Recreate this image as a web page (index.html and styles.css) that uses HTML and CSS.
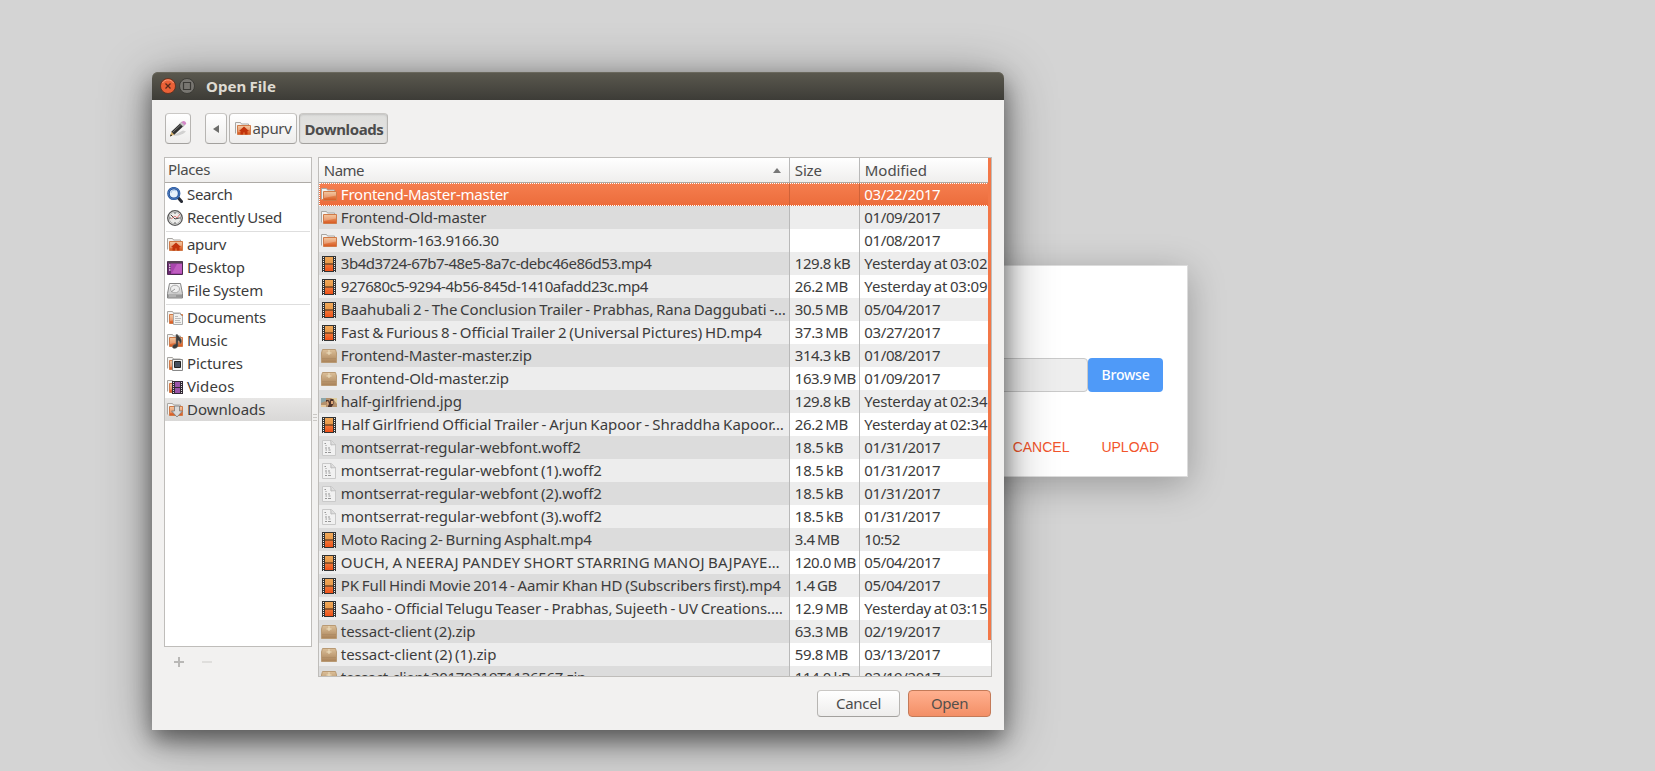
FILE: index.html
```html
<!DOCTYPE html>
<html lang="en">
<head>
<meta charset="utf-8">
<title>Open File</title>
<link rel="stylesheet" href="styles.css">
</head>
<body>
<svg class="defs" width="0" height="0">
  <defs>
    <linearGradient id="or" x1="0" y1="0" x2="0" y2="1"><stop offset="0" stop-color="#f0b680"/><stop offset="1" stop-color="#d8561f"/></linearGradient>
    <linearGradient id="film" x1="0" y1="0" x2="0" y2="1"><stop offset="0" stop-color="#f0a858"/><stop offset=".5" stop-color="#e89848"/><stop offset=".55" stop-color="#f07838"/><stop offset="1" stop-color="#f05018"/></linearGradient>
    <linearGradient id="box" x1="0" y1="0" x2="0" y2="1"><stop offset="0" stop-color="#dcc09a"/><stop offset="1" stop-color="#a98258"/></linearGradient>
    <linearGradient id="gr" x1="0" y1="0" x2="0" y2="1"><stop offset="0" stop-color="#fafafa"/><stop offset="1" stop-color="#b8b8b8"/></linearGradient>
  </defs>
  <symbol id="folder" viewBox="0 0 16 16"><path d="M.5 12.500v-11h5l1 1.500h7v3" fill="#f4f3f1" stroke="#a9a6a2"/><path d="M2.500 4.500h13v9h-13z" fill="url(#or)" stroke="#d07a48"/><path d="M3 5h12v3.500L3 11z" fill="#fff" opacity=".25"/></symbol>
  <symbol id="home" viewBox="0 0 16 16"><use href="#folder"/><path d="M9 5.500l5 4.500h-1.500v3.500h-2.500v-2h-2v2H5.500V10H4z" fill="#c2330b"/></symbol>
  <symbol id="film-i" viewBox="0 0 16 16"><path d="M1 0h14v16H1z" fill="#333"/><path d="M4 1h8v14H4z" fill="url(#film)"/><path d="M4 8h8" stroke="#402010" stroke-width="1"/><path d="M2.500 1v15M13.500 1v15" stroke="#eee" stroke-width="1" stroke-dasharray="1 1"/></symbol>
  <symbol id="zip" viewBox="0 0 16 16"><path d="M1.500 1.500h13l1 3.500v9.500H.5V5z" fill="url(#box)" stroke="#b99a74"/><path d="M1 5.500h14" stroke="#cbad86"/><path d="M8 2v5M5.500 5h5" stroke="#eee0c0" stroke-width="1"/><path d="M1 10.500h14" stroke="#a98760" opacity=".5"/></symbol>
  <symbol id="doc" viewBox="0 0 16 16"><path d="M1.500.5h9l4 4v11h-13z" fill="#f1f1f1" stroke="#c9c9c9"/><path d="M9.500.5c1 2 0 3 .5 4.500 2-.5 3 0 4.500-.5" fill="#ddd" stroke="#bbb"/><path d="M3.500 3.500h1.500M4.500 5.500h1M4 8h2M7 8h2M4.500 10h1.500M7.500 10h2M4 12.500h2M7 12.500h3" stroke="#969696" stroke-width="1.200"/></symbol>
  <symbol id="photo" viewBox="0 0 16 16"><path d="M0 4h16v9H0z" fill="#b4916c"/><path d="M0 4h5v3l-5 2z" fill="#8ba5a8"/><path d="M10 4h6v6l-3-4z" fill="#e0cfa0"/><path d="M5 6h2.500l1 2 1-3h3v5l-2 3H7l0-3-2-1z" fill="#4d332a"/><path d="M5 8l2-1 1 3-1 2zM10 7h2v3h-2z" fill="#dca77a"/><path d="M0 11h5v2H0z" fill="#e6c79a"/></symbol>
  <symbol id="search" viewBox="0 0 16 16"><path d="M11 10.500l3.500 4" stroke="#272b35" stroke-width="3" stroke-linecap="round"/><circle cx="6.800" cy="6.500" r="5.300" fill="#e9f1fa" stroke="#24549c" stroke-width="2.600"/><circle cx="6.800" cy="6.500" r="5.500" fill="none" stroke="#628ccc" stroke-width=".7"/><path d="M4 6a3 3 0 0 1 5-2" stroke="#a9c4e8" fill="none"/></symbol>
  <symbol id="clock" viewBox="0 0 16 16"><circle cx="8" cy="8" r="7.300" fill="#ececea" stroke="#555" stroke-width="1.300"/><circle cx="8" cy="8" r="5.800" fill="none" stroke="#bbb" stroke-width="1"/><path d="M4 5l4 4 4-1" stroke="#444" fill="none"/><path d="M4 9l4-3 2 2 3-4" stroke="#d66" fill="none" stroke-width=".8"/><path d="M8 2v2M8 12v2M2 8h2M12 8h2" stroke="#666"/></symbol>
  <symbol id="desktop" viewBox="0 0 16 16"><path d="M.5 1.500h15v13H.5z" fill="#a845ad" stroke="#4b2b4e"/><path d="M1 1h14v2.500H1z" fill="#554355"/><path d="M1 3.500h3v11H1z" fill="#6a2a70"/><path d="M2 5h1.500M2 7.500h1.500M2 10h1.500" stroke="#e8cdea" stroke-width="1.400"/><path d="M5 13l5-9h5v9z" fill="#d271cf" opacity=".55"/></symbol>
  <symbol id="drive" viewBox="0 0 16 16"><path d="M2.500.5h11l2 10v4.500H.5v-4.500z" fill="url(#gr)" stroke="#858585"/><ellipse cx="8" cy="6" rx="4.500" ry="3.800" fill="#eee" stroke="#aaa"/><path d="M4 9l4-3" stroke="#999"/><path d="M1 11.500h14v3H1z" fill="#999"/><path d="M2 13h7" stroke="#ccc"/></symbol>
  <symbol id="documents" viewBox="0 0 16 16"><use href="#folder"/><path d="M6.500 3.500h6l3 3v8h-9z" fill="#f2f2f0" stroke="#aaa"/><path d="M8 6.500h3M8 8.500h6M8 10.500h5M8 12.500h6" stroke="#bbb"/></symbol>
  <symbol id="music" viewBox="0 0 16 16"><use href="#folder"/><path d="M9 1.500h1.500c.5 2 4.500 3 4 7.500l-1.500 2c0-2-.5-3-2-3.500V12.500c0 3-5.500 4-5.500 1.500C5.500 12 7.500 11 9 11z" fill="#3b3b3b" stroke="#777" stroke-width=".5"/></symbol>
  <symbol id="pictures" viewBox="0 0 16 16"><use href="#folder"/><path d="M5.500 3.500h10v11h-10z" fill="#f5f5f5" stroke="#888"/><path d="M7.500 5.500h6v6h-6z" fill="#46505f" stroke="#222"/></symbol>
  <symbol id="videos" viewBox="0 0 16 16"><use href="#folder"/><path d="M5 2h11v13H5z" fill="#332a35"/><path d="M8 3h5v11H8z" fill="#9a55a8"/><path d="M8 8.500h5" stroke="#332a35"/><path d="M6.500 3v12M14.500 3v12" stroke="#ddd" stroke-width="1" stroke-dasharray="1 1"/></symbol>
  <symbol id="downloads" viewBox="0 0 16 16"><use href="#folder"/><path d="M7.500 4h5v5h3l-5.500 6-5.500-6h3z" fill="#d9d9d9" stroke="#777" stroke-width=".8"/></symbol>
</svg>

<section class="upload">
  <div class="picker"><div class="field"></div><button class="browse"><span data-w="48">Browse</span></button></div>
  <div class="links"><a>CANCEL</a><a>UPLOAD</a></div>
</section>

<main class="window">
  <header class="titlebar">
    <svg width="16" height="16" viewBox="0 0 16 16"><circle cx="8" cy="8" r="7.500" fill="#ea6137" stroke="#5b2c1c" stroke-width=".8"/><path d="M2.500 5a6.500 6.500 0 0 1 11 0" stroke="#f79a78" fill="none"/><path d="M5.500 5.500l5 5M10.500 5.500l-5 5" stroke="#5a2a1a" stroke-width="1.300"/></svg>
    <svg width="16" height="16" viewBox="0 0 16 16"><circle cx="8" cy="8" r="7.500" fill="#787671" stroke="#34332f" stroke-width=".8"/><path d="M4.500 4.500h7v7h-7z" stroke="#3b3a36" fill="none" stroke-width="1.200"/></svg>
    <h1><span data-w="70">Open File</span></h1>
  </header>
  <nav class="path">
    <button class="btn pencil"><svg width="18" height="18" viewBox="0 0 18 18"><path d="M4 15.500q8 1 13-4l-3-1z" fill="#bbb" opacity=".6"/><path d="M1 16.500l1.500-5 3 3z" fill="#d9b36c"/><path d="M1 16.500l.8-2.200 1.300 1.300z" fill="#111"/><path d="M2.300 11.800L11 3.500l3 3-8.700 8.200z" fill="#30302f"/><path d="M3.500 12.500l8.500-8" stroke="#777"/><path d="M11 3.500l1.700-1.500 3 3L14 6.500z" fill="#c8c8c8" stroke="#777" stroke-width=".4"/><path d="M12.500 2.200q2-2.200 3.800-.5t-.6 3.600z" fill="#d487c8"/></svg></button>
    <button class="btn back"><svg width="6" height="8" viewBox="0 0 6 8"><path d="M6 0v8L0 4z" fill="#6d6d6b"/></svg></button>
    <button class="btn user"><svg width="16" height="16"><use href="#home"/></svg><span data-w="39">apurv</span></button>
    <button class="btn current"><span data-w="79">Downloads</span></button>
  </nav>
  <div class="content">
    <aside>
      <div class="places">
        <div class="head"><span data-w="42">Places</span></div>
        <div class="place"><svg><use href="#search"/></svg><span data-w="45.500">Search</span></div>
        <div class="place"><svg><use href="#clock"/></svg><span data-w="95">Recently Used</span></div>
        <div class="sep"></div>
        <div class="place"><svg><use href="#home"/></svg><span data-w="39">apurv</span></div>
        <div class="place"><svg><use href="#desktop"/></svg><span data-w="58">Desktop</span></div>
        <div class="place"><svg><use href="#drive"/></svg><span data-w="76">File System</span></div>
        <div class="sep"></div>
        <div class="place"><svg><use href="#documents"/></svg><span data-w="79">Documents</span></div>
        <div class="place"><svg><use href="#music"/></svg><span data-w="40.500">Music</span></div>
        <div class="place"><svg><use href="#pictures"/></svg><span data-w="56">Pictures</span></div>
        <div class="place"><svg><use href="#videos"/></svg><span data-w="47.500">Videos</span></div>
        <div class="place active"><svg><use href="#downloads"/></svg><span data-w="78.500">Downloads</span></div>
      </div>
      <div class="tools"><svg width="10" height="10"><path d="M5 0v10M0 5h10" stroke="#b9b8b6" stroke-width="2"/></svg><svg width="10" height="10"><path d="M0 5h10" stroke="#dfdedc" stroke-width="2"/></svg></div>
    </aside>
    <div class="grip"><i></i><i></i><i></i></div>
    <div class="files">
      <div class="row head"><div><span data-w="40">Name</span><svg class="sort" width="8" height="5" viewBox="0 0 8 5"><path d="M4 0l4 5H0z" fill="#777"/></svg></div><div><span data-w="27">Size</span></div><div><span data-w="62">Modified</span></div></div>
      <div id="rows"></div>
      <div class="scroll"></div>
    </div>
  </div>
  <footer><button class="btn"><span data-w="45">Cancel</span></button><button class="btn open"><span data-w="37">Open</span></button></footer>
</main>
<script src="app.js"></script>
</body>
</html>
```
FILE: styles.css
```css
* { box-sizing: border-box; }
body { margin: 0; width: 1655px; height: 771px; overflow: hidden; position: relative; background: #d4d4d4; font: 15px/23px "Noto Sans", sans-serif; color: #3c3c3c; word-spacing: -1px; }
.defs { position: absolute; }
span { white-space: nowrap; }
button { font: inherit; color: inherit; border: 0; padding: 0; }
.upload { position: absolute; left: 500px; top: 265px; width: 688px; height: 212px; background: #fff; border: 1px solid #dcdcdc; box-shadow: 0 8px 34px rgba(0,0,0,.27); }
.picker { display: flex; justify-content: flex-end; margin: 92px 24px 0 24px; height: 34px; }
.field { flex: 1; background: #eee; border: 1px solid #c9c9c9; border-radius: 4px; }
.browse { width: 75px; padding-bottom: 2px; background: #4f9af8; color: #fff; border-radius: 4px; font-size: 14px; font-weight: 500; }
.links { display: flex; justify-content: flex-end; gap: 32px; margin: 44px 28px 0 0; color: #f2552c; font: 14px/23px "Liberation Sans", sans-serif; }
.window { position: absolute; left: 152px; top: 72px; width: 852px; height: 658px; background: #f2f1f0; border-radius: 6px 6px 0 0; box-shadow: 0 8px 52px rgba(0,0,0,.42), 0 10px 22px rgba(0,0,0,.42); }
.titlebar { display: flex; align-items: center; gap: 3px; height: 28px; padding: 0 7px 0 8px; background: linear-gradient(#5b594f, #3d3c37); border-radius: 6px 6px 0 0; box-shadow: inset 0 1px #6a685d; color: #dfdbd2; }
h1 { margin: 0 0 0 8px; font-size: 15px; line-height: 20px; font-weight: 700; }
.path { display: flex; height: 31px; margin: 13px 13px 0; gap: 2px; }
.btn { display: flex; align-items: center; justify-content: center; border: 1px solid #b7b5b2; border-top-color: #cac8c5; border-bottom-color: #a3a19e; border-radius: 4px; background: linear-gradient(#fff, #eeedec); color: #4c4c4c; }
.pencil { width: 26px; margin-right: 12px; }
.back { width: 22px; }
.user { width: 68px; gap: 2px; }
.current { width: 89px; padding: 1px 0 0 1px; font-weight: 700; background: linear-gradient(#dededc, #e6e5e3); box-shadow: inset 0 1px 2px rgba(0,0,0,.12); }
.content { display: flex; margin: 13px 12px 0; height: 520px; }
aside { width: 148px; }
.places { height: 490px; background: #fff; border: 1px solid #bfbdba; }
.head { height: 25px; background: linear-gradient(#fff, #efeeed); border-bottom: 1px solid #aeaba7; color: #4c4c4c; }
.places .head { padding-left: 3px; }
.place { display: flex; align-items: center; gap: 4px; height: 23px; padding-left: 2px; }
.place svg, .cell-name svg { width: 16px; height: 16px; flex: none; }
.place.active { background: linear-gradient(#e7e6e5, #d9d8d7); }
.sep { height: 4px; padding-top: 2px; margin: 0 1px; }
.sep::after { content: ""; display: block; height: 1px; background: #dedede; }
.tools { display: flex; gap: 18px; padding: 10px; }
.grip { width: 6px; display: flex; flex-direction: column; justify-content: center; gap: 2px; padding: 0 1px; }
.grip i { height: 1px; background: #c9c7c4; }
.files { position: relative; width: 675px; height: 520px; overflow: hidden; border: 1px solid #bfbdba; background: #fff; }
.row { display: grid; grid-template-columns: 471px 70px 132px; height: 23px; }
.row > div { border-right: 1px solid #b9b9b9; padding-left: 5px; overflow: hidden; white-space: nowrap; }
.row > div:last-child { border-right: 0; padding-left: 4.5px; }
.row.head { height: 25px; }
.row.head > div { display: flex; align-items: center; }
.row.head > div:last-child { padding-left: 5px; }
.sort { margin-left: auto; margin-right: 8px; }
.row .cell-name { display: flex; align-items: center; gap: 4px; padding-left: 2px; background: #ededed; }
#rows .row:nth-child(even) { background: #ededed; }
#rows .row:nth-child(even) .cell-name { background: #dcdcdc; }
#rows .row.selected { position: relative; background: linear-gradient(#f57e4f, #ec6c3b); color: #fff; }
.row.selected::after { content: ""; position: absolute; inset: 0; border-top: 1px dotted #fff; border-bottom: 1px dotted #fff; border-left: 1px dotted #fff; }
#rows .row.selected .cell-name { background: none; }
#rows .row.selected > div { border-right-color: #cf6238; }
.scroll { position: absolute; right: 0; top: 0; width: 3px; height: 482px; background: #f37747; }
footer { display: flex; justify-content: flex-end; gap: 8px; margin: 13px 13px 0; }
footer .btn { width: 83px; height: 27px; }
.btn.open { background: linear-gradient(#ffb08f, #f38f66); border-color: #c47a58; color: #55504c; }
```
FILE: app.js
```js
const files = [
  ["folder", "Frontend-Master-master", 168, "", 0, "03/22/2017"],
  ["folder", "Frontend-Old-master", 145.5, "", 0, "01/09/2017"],
  ["folder", "WebStorm-163.9166.30", 158, "", 0, "01/08/2017"],
  ["film-i", "3b4d3724-67b7-48e5-8a7c-debc46e86d53.mp4", 310.5, "129.8 kB", 55.5, "Yesterday at 03:02"],
  ["film-i", "927680c5-9294-4b56-845d-1410afadd23c.mp4", 307, "26.2 MB", 53, "Yesterday at 03:09"],
  ["film-i", "Baahubali 2 - The Conclusion Trailer - Prabhas, Rana Daggubati -…", 445, "30.5 MB", 53, "05/04/2017"],
  ["film-i", "Fast & Furious 8 - Official Trailer 2 (Universal Pictures) HD.mp4", 421, "37.3 MB", 53, "03/27/2017"],
  ["zip", "Frontend-Master-master.zip", 191, "314.3 kB", 55.5, "01/08/2017"],
  ["zip", "Frontend-Old-master.zip", 168, "163.9 MB", 61, "01/09/2017"],
  ["photo", "half-girlfriend.jpg", 121, "129.8 kB", 55.5, "Yesterday at 02:34"],
  ["film-i", "Half Girlfriend Official Trailer - Arjun Kapoor - Shraddha Kapoor…", 443, "26.2 MB", 53, "Yesterday at 02:34"],
  ["doc", "montserrat-regular-webfont.woff2", 240, "18.5 kB", 48.5, "01/31/2017"],
  ["doc", "montserrat-regular-webfont (1).woff2", 261, "18.5 kB", 48.5, "01/31/2017"],
  ["doc", "montserrat-regular-webfont (2).woff2", 261, "18.5 kB", 48.5, "01/31/2017"],
  ["doc", "montserrat-regular-webfont (3).woff2", 261, "18.5 kB", 48.5, "01/31/2017"],
  ["film-i", "Moto Racing 2- Burning Asphalt.mp4", 251, "3.4 MB", 44.5, "10:52"],
  ["film-i", "OUCH, A NEERAJ PANDEY SHORT STARRING MANOJ BAJPAYE…", 439, "120.0 MB", 61, "05/04/2017"],
  ["film-i", "PK Full Hindi Movie 2014 - Aamir Khan HD (Subscribers first).mp4", 440, "1.4 GB", 42, "05/04/2017"],
  ["film-i", "Saaho - Official Telugu Teaser - Prabhas, Sujeeth - UV Creations.…", 442, "12.9 MB", 53, "Yesterday at 03:15"],
  ["zip", "tessact-client (2).zip", 134.5, "63.3 MB", 53, "02/19/2017"],
  ["zip", "tessact-client (2) (1).zip", 155.5, "59.8 MB", 53, "03/13/2017"],
  ["zip", "tessact-client 20170219T113656Z.zip", 245, "114.0 kB", 55.5, "02/19/2017"]
];
const dateWidth = d => d.startsWith("Y") ? 123 : d.length > 5 ? 76 : 35.5;
const cell = (text, w) => `<span data-w="${w}">${text.replace("&", "&amp;")}</span>`;
document.getElementById("rows").innerHTML = files.map(([icon, name, nw, size, sw, date], i) =>
  `<div class="row${i ? "" : " selected"}"><div class="cell-name"><svg><use href="#${icon}"/></svg>${cell(name, nw)}</div><div>${size ? cell(size, sw) : ""}</div><div>${cell(date, dateWidth(date))}</div></div>`
).join("");

document.querySelectorAll("[data-w]").forEach(el => {
  const natural = el.getBoundingClientRect().width;
  el.style.letterSpacing = (el.dataset.w - natural) / el.textContent.length + "px";
});
```
